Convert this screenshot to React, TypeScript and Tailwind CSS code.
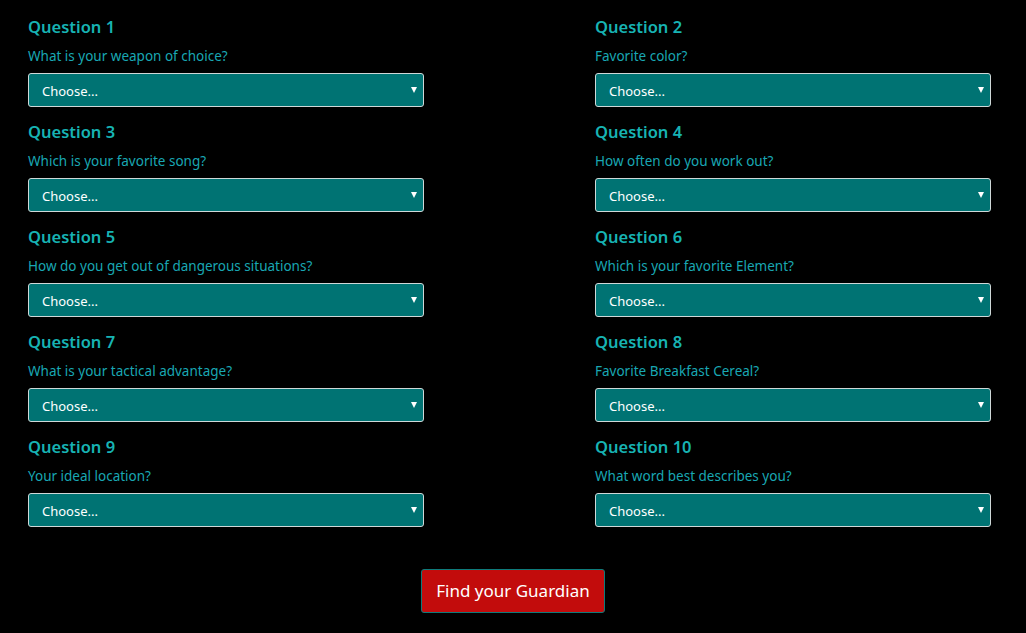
import React from 'react';

const questions = [
  { title: 'Question 1', label: 'What is your weapon of choice?' },
  { title: 'Question 2', label: 'Favorite color?' },
  { title: 'Question 3', label: 'Which is your favorite song?' },
  { title: 'Question 4', label: 'How often do you work out?' },
  { title: 'Question 5', label: 'How do you get out of dangerous situations?' },
  { title: 'Question 6', label: 'Which is your favorite Element?' },
  { title: 'Question 7', label: 'What is your tactical advantage?' },
  { title: 'Question 8', label: 'Favorite Breakfast Cereal?' },
  { title: 'Question 9', label: 'Your ideal location?' },
  { title: 'Question 10', label: 'What word best describes you?' },
];

function QuestionBlock({ title, label }: { title: string; label: string }) {
  return (
    <div>
      <h3 className="text-[16.5px] leading-[26px] font-semibold text-[#17b3b3]">{title}</h3>
      <p className="mt-[7px] text-[13.5px] leading-[18px] text-[#19a7b3]">{label}</p>
      <div className="relative mt-[8px]">
        <select
          defaultValue=""
          className="w-full h-[34px] appearance-none rounded-[3px] border border-[#cfd8d8] bg-[#007373] pl-[13px] pr-8 pt-[3px] text-[13px] text-white outline-none"
        >
          <option value="">Choose...</option>
        </select>
        <span className="pointer-events-none absolute right-[7px] top-[14px] h-0 w-0 border-x-[3px] border-t-[6px] border-x-transparent border-t-white" />
      </div>
    </div>
  );
}

export default function App() {
  return (
    <div className="min-h-[633px] bg-black font-['Noto_Sans','Open_Sans',sans-serif]">
      <div className="grid grid-cols-[396px_396px] gap-x-[171px] gap-y-[12px] pl-[28px] pt-[14px]">
        {questions.map((q) => (
          <QuestionBlock key={q.title} title={q.title} label={q.label} />
        ))}
      </div>
      <div className="flex justify-center pt-[42px]">
        <button className="h-[44px] w-[184px] rounded-[3px] border border-[#0e7b7b] bg-[#c20c0c] text-[17px] text-white">
          Find your Guardian
        </button>
      </div>
    </div>
  );
}
